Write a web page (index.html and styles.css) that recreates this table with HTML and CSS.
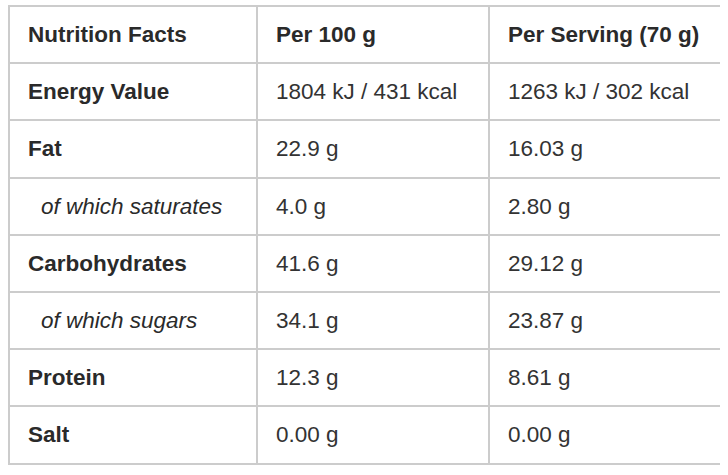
FILE: index.html
```html
<!DOCTYPE html>
<html lang="en">
<head>
<meta charset="utf-8">
<title>Nutrition Facts</title>
<link rel="stylesheet" href="styles.css">
</head>
<body>
<table class="nutrition">
  <colgroup>
    <col class="col-name">
    <col class="col-val">
    <col class="col-val">
  </colgroup>
  <thead>
    <tr>
      <th>Nutrition Facts</th>
      <th>Per 100 g</th>
      <th>Per Serving (70 g)</th>
    </tr>
  </thead>
  <tbody>
    <tr>
      <th>Energy Value</th>
      <td>1804 kJ / 431 kcal</td>
      <td>1263 kJ / 302 kcal</td>
    </tr>
    <tr>
      <th>Fat</th>
      <td>22.9 g</td>
      <td>16.03 g</td>
    </tr>
    <tr class="sub">
      <th>of which saturates</th>
      <td>4.0 g</td>
      <td>2.80 g</td>
    </tr>
    <tr>
      <th>Carbohydrates</th>
      <td>41.6 g</td>
      <td>29.12 g</td>
    </tr>
    <tr class="sub">
      <th>of which sugars</th>
      <td>34.1 g</td>
      <td>23.87 g</td>
    </tr>
    <tr>
      <th>Protein</th>
      <td>12.3 g</td>
      <td>8.61 g</td>
    </tr>
    <tr>
      <th>Salt</th>
      <td>0.00 g</td>
      <td>0.00 g</td>
    </tr>
  </tbody>
</table>
</body>
</html>
```
FILE: styles.css
```css
html, body {
  background: #ffffff;
}
body {
  margin: 5px 8px 0 8px;
  font-family: "Liberation Sans", Arial, sans-serif;
  color: #333333;
}
.nutrition {
  border-collapse: collapse;
  width: 712px;
  table-layout: fixed;
  font-size: 22.5px;
  line-height: 25.2px;
}
.col-name {
  width: 248px;
}
.col-val {
  width: 232px;
}
.nutrition th,
.nutrition td {
  border: 2px solid #cccccc;
  padding: 15px 18px;
  text-align: left;
  vertical-align: middle;
  white-space: nowrap;
}
.nutrition th {
  font-weight: bold;
  color: #2a2a2a;
}
.nutrition td {
  font-weight: normal;
}
.nutrition .sub th {
  font-weight: normal;
  font-style: italic;
  padding-left: 31px;
}
```
